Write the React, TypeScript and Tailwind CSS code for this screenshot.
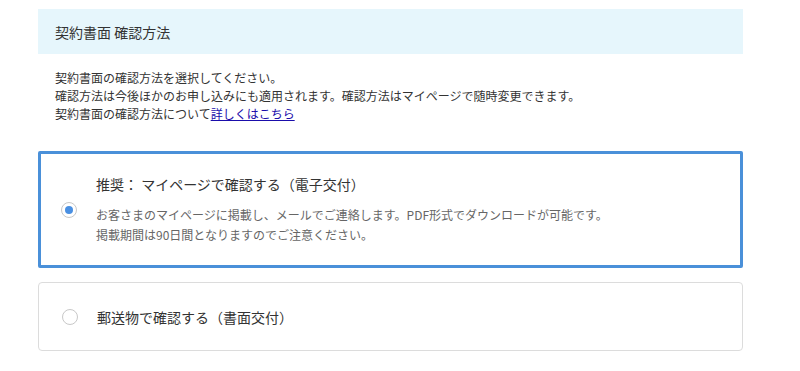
export default function App() {
  return (
    <div
      className="w-[800px] h-[371px] bg-white text-[#333] overflow-hidden"
      style={{ fontFamily: '"Noto Sans CJK JP", "Noto Sans", sans-serif' }}
    >
      <div className="ml-[38px] w-[705px] pt-[9px]">
        {/* Header */}
        <div className="h-[45px] bg-[#e6f6fc] flex items-center pl-[17px]">
          <h1 className="text-[14px] leading-5 text-[#333]">契約書面 確認方法</h1>
        </div>

        {/* Description */}
        <div className="mt-[15px] pl-[17px] text-[12px] leading-[18px] text-[#333]">
          <p>契約書面の確認方法を選択してください。</p>
          <p>確認方法は今後ほかのお申し込みにも適用されます。確認方法はマイページで随時変更できます。</p>
          <p>
            契約書面の確認方法について
            <a href="#" className="text-[#1a0dab] underline">
              詳しくはこちら
            </a>
          </p>
        </div>

        {/* Option 1 (selected) */}
        <label className="mt-[28px] flex items-center border-[3px] border-[#4a90d9] rounded-[2px] h-[117px] cursor-pointer">
          <span className="ml-[20px] w-4 h-4 rounded-full border border-[#c8c8c8] bg-white flex items-center justify-center shrink-0">
            <span className="w-[8px] h-[8px] rounded-full bg-[#4a90e2]" />
          </span>
          <div className="ml-[19px]">
            <p className="text-[14px] leading-5 text-[#333]">推奨： マイページで確認する（電子交付）</p>
            <div className="mt-[11px] text-[12px] leading-5 text-[#666]">
              <p>お客さまのマイページに掲載し、メールでご連絡します。PDF形式でダウンロードが可能です。</p>
              <p>掲載期間は90日間となりますのでご注意ください。</p>
            </div>
          </div>
        </label>

        {/* Option 2 */}
        <label className="mt-[14px] flex items-center border border-[#dcdcdc] rounded-[4px] h-[69px] cursor-pointer">
          <span className="ml-[23px] w-4 h-4 rounded-full border border-[#c8c8c8] bg-white shrink-0" />
          <p className="ml-[19px] text-[14px] leading-5 text-[#333]">郵送物で確認する（書面交付）</p>
        </label>
      </div>
    </div>
  );
}
